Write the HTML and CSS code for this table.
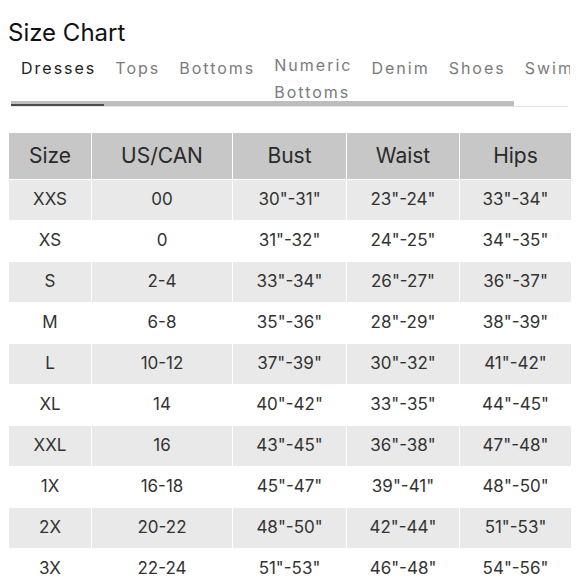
FILE: index.html
```html
<!DOCTYPE html>
<html>
<head>
<meta charset="utf-8">
<link rel="stylesheet" href="styles.css">
</head>
<body>
<h1 class="title">Size Chart</h1>
<nav class="tabs">
  <span class="tab active">Dresses</span>
  <span class="tab">Tops</span>
  <span class="tab">Bottoms</span>
  <span class="tab wrap">Numeric<br>Bottoms</span>
  <span class="tab">Denim</span>
  <span class="tab">Shoes</span>
  <span class="tab">Swimwear</span>
</nav>
<div class="track">
  <div class="thumb"><div class="indicator"></div></div>
</div>
<table class="chart">
  <colgroup>
    <col class="c1"><col class="c2"><col class="c3"><col class="c4"><col class="c5">
  </colgroup>
  <thead>
    <tr><th>Size</th><th>US/CAN</th><th>Bust</th><th>Waist</th><th>Hips</th></tr>
  </thead>
  <tbody>
    <tr><td>XXS</td><td>00</td><td>30"-31"</td><td>23"-24"</td><td>33"-34"</td></tr>
    <tr><td>XS</td><td>0</td><td>31"-32"</td><td>24"-25"</td><td>34"-35"</td></tr>
    <tr><td>S</td><td>2-4</td><td>33"-34"</td><td>26"-27"</td><td>36"-37"</td></tr>
    <tr><td>M</td><td>6-8</td><td>35"-36"</td><td>28"-29"</td><td>38"-39"</td></tr>
    <tr><td>L</td><td>10-12</td><td>37"-39"</td><td>30"-32"</td><td>41"-42"</td></tr>
    <tr><td>XL</td><td>14</td><td>40"-42"</td><td>33"-35"</td><td>44"-45"</td></tr>
    <tr><td>XXL</td><td>16</td><td>43"-45"</td><td>36"-38"</td><td>47"-48"</td></tr>
    <tr><td>1X</td><td>16-18</td><td>45"-47"</td><td>39"-41"</td><td>48"-50"</td></tr>
    <tr><td>2X</td><td>20-22</td><td>48"-50"</td><td>42"-44"</td><td>51"-53"</td></tr>
    <tr><td>3X</td><td>22-24</td><td>51"-53"</td><td>46"-48"</td><td>54"-56"</td></tr>
  </tbody>
</table>
</body>
</html>
```
FILE: styles.css
```css
html, body {
  margin: 0;
  padding: 0;
  background: #fff;
}
body {
  padding: 0 8px;
  font-family: "Inter", "Liberation Sans", sans-serif;
  color: #333;
  overflow: hidden;
}
.title {
  margin: 18px 0 0;
  font-size: 24px;
  line-height: 30px;
  font-weight: 400;
  color: #111;
}
.tabs {
  margin-top: 4px;
  height: 49px;
  width: 562px;
  padding-left: 13px;
  box-sizing: border-box;
  display: flex;
  gap: 19px;
  align-items: flex-start;
  overflow: hidden;
  white-space: nowrap;
}
.tab {
  font-size: 16px;
  line-height: 27px;
  letter-spacing: 2px;
  color: #7b7b7b;
  padding-top: 3px;
  flex: none;
}
.tab.active { color: #222; }
.tab.wrap { padding-top: 0; }
.track {
  margin-left: 3px;
  width: 557px;
  height: 5px;
  border-bottom: 1px solid #e4e4e4;
}
.thumb {
  position: relative;
  width: 503px;
  height: 5px;
  background: #bdbdbd;
}
.indicator {
  position: absolute;
  left: 0;
  bottom: 0;
  width: 93px;
  height: 2px;
  background: #4a4a4a;
}
.chart {
  margin-top: 25px;
  margin-left: 0;
  width: 564px;
  table-layout: fixed;
  border-collapse: separate;
  border-spacing: 1px;
}
.c1 { width: 82px; }
.c2 { width: 140px; }
.c3 { width: 113px; }
.c4 { width: 112px; }
.c5 { width: 111px; }
.chart th, .chart td {
  padding: 0 0 2px;
  text-align: center;
  color: #333;
}
.chart th {
  height: 44px;
  background: #c7c7c7;
  font-size: 21px;
  font-weight: 400;
  color: #2a2a2a;
}
.chart td {
  height: 38px;
  font-size: 17px;
}
.chart tbody tr:nth-child(odd) td { background: #e9e9e9; }
```
